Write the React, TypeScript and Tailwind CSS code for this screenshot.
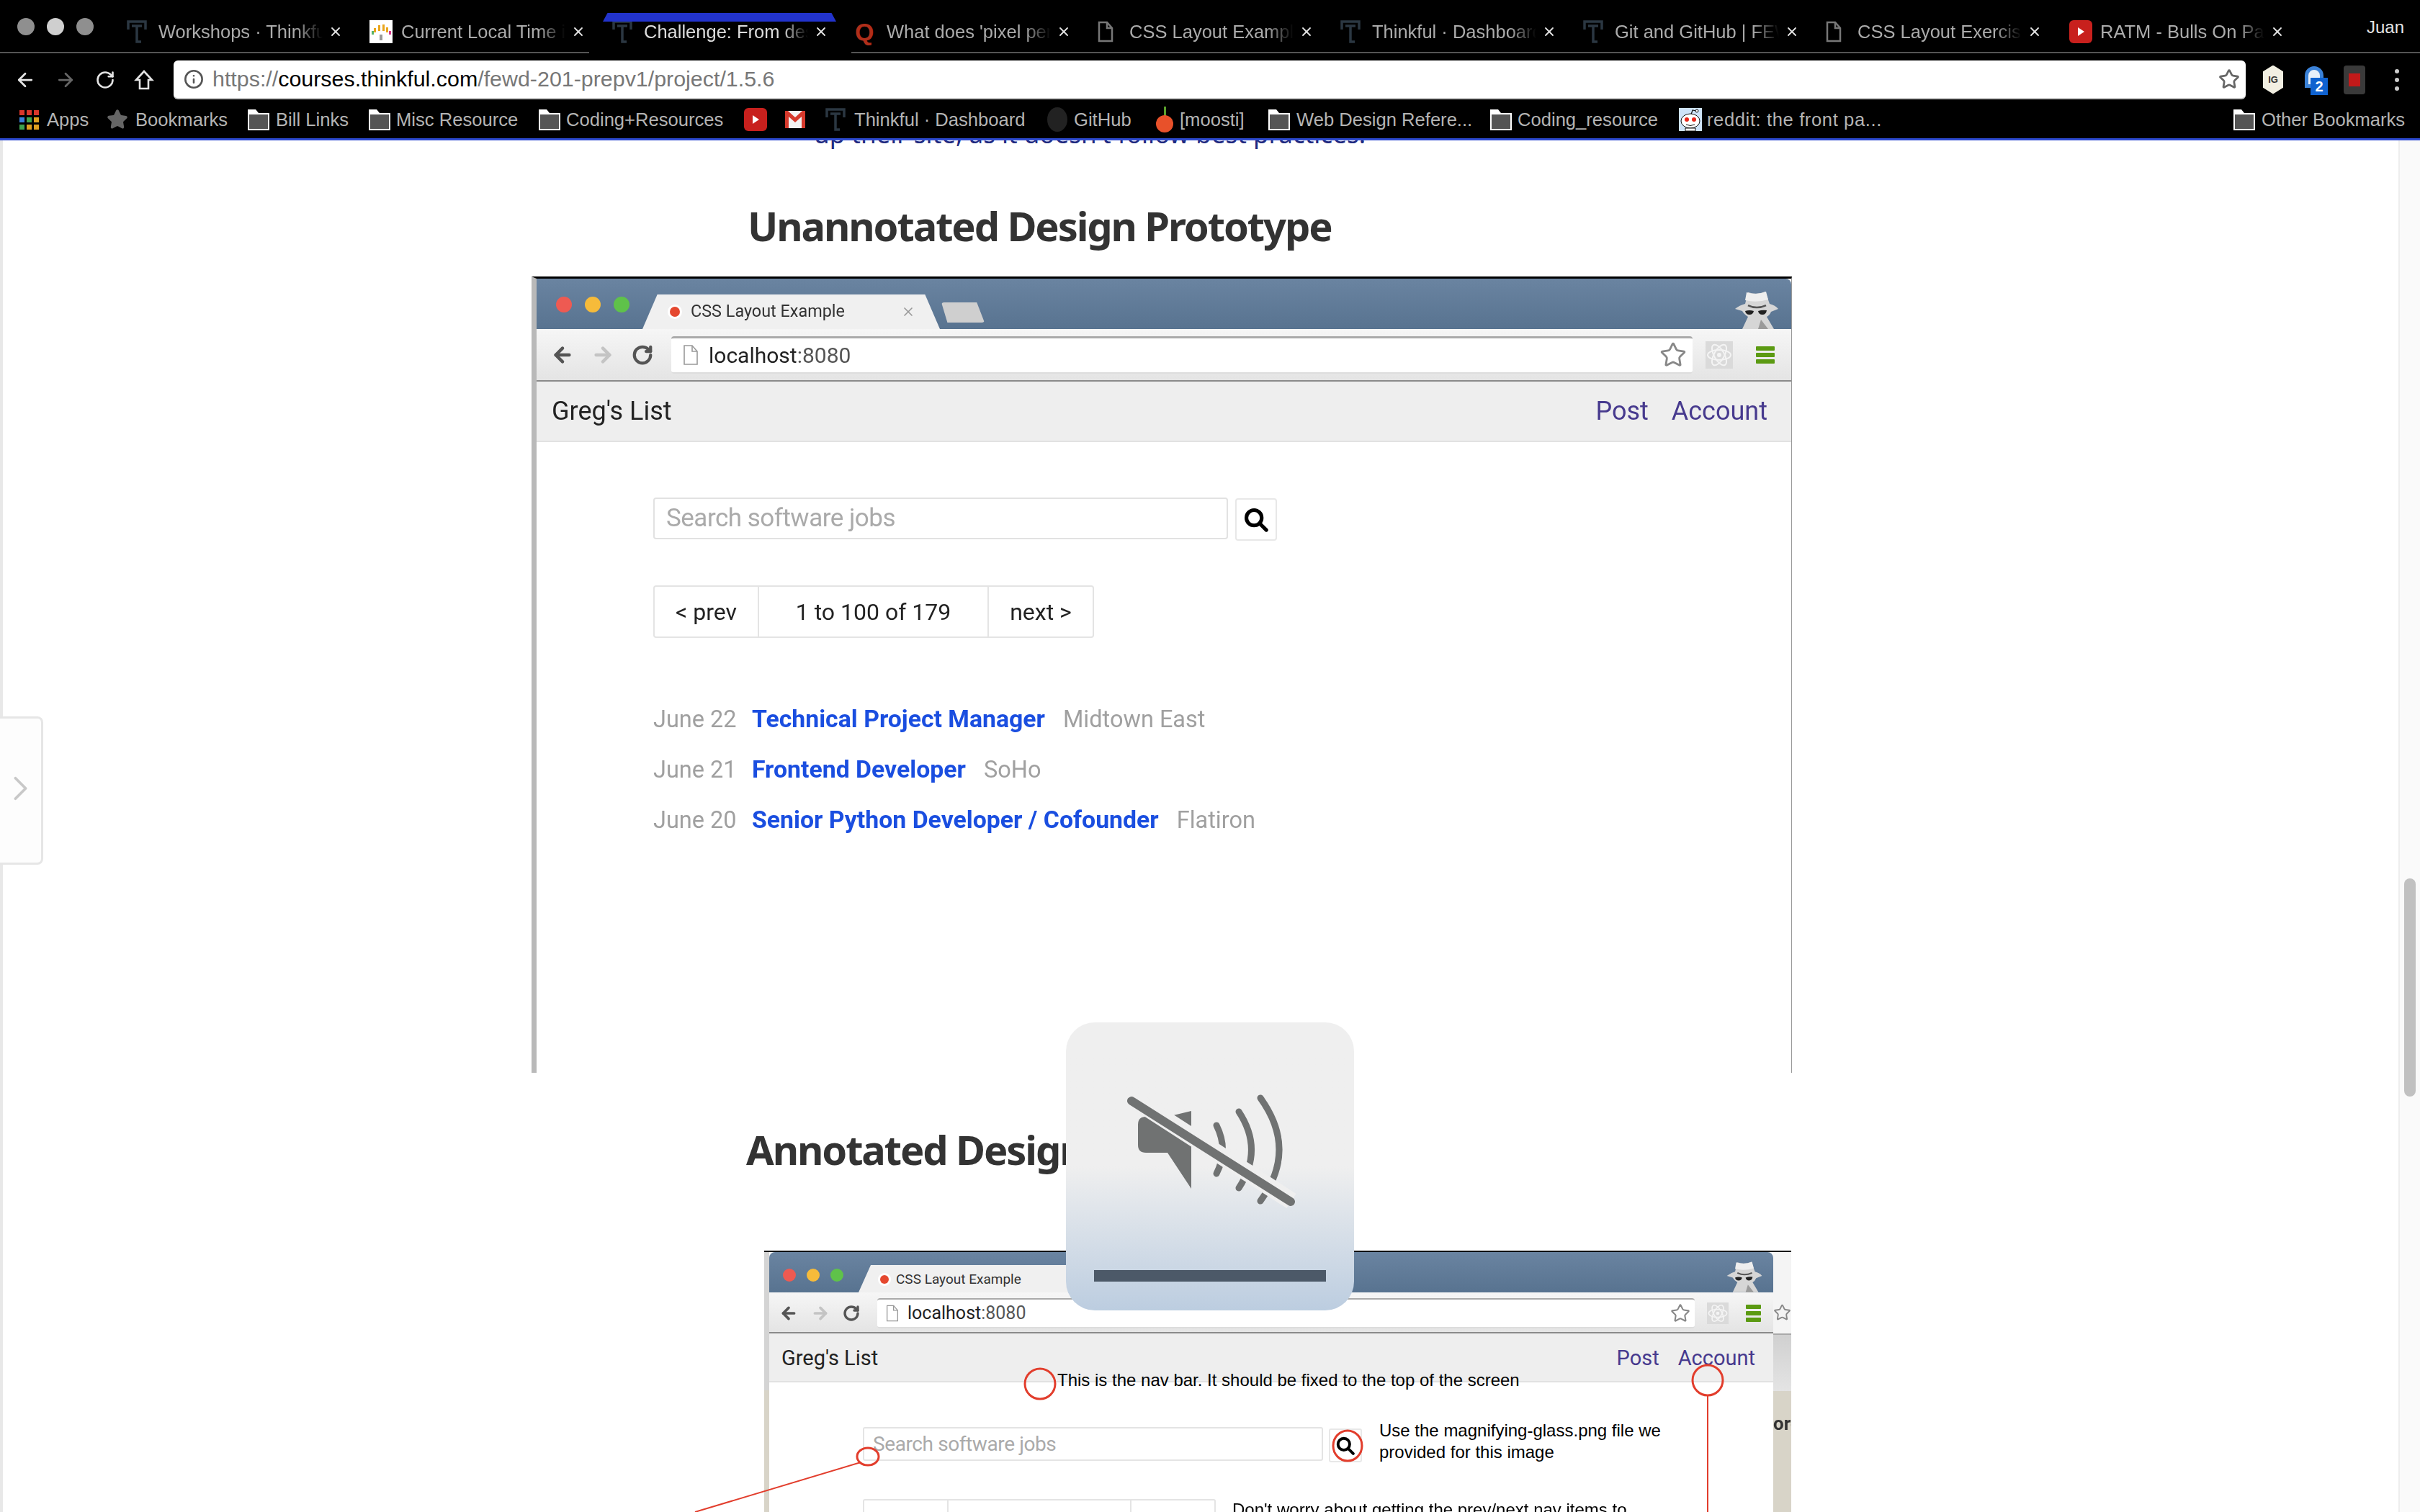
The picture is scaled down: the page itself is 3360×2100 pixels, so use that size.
import React from "react";
import { ArrowLeft, ArrowRight, RotateCw, Info, Star, X, ChevronRight } from "lucide-react";

const Thinkful = () => (
  <svg width="28" height="32" viewBox="0 0 28 32" fill="none" stroke="#2b3742" strokeWidth="3.5">
    <path d="M2 13V2h24v11" />
    <path d="M7 8h14M14 8v22h6" />
  </svg>
);
const Doc = ({ c = "#777" }: { c?: string }) => (
  <svg width="22" height="30" viewBox="0 0 22 30" fill="none" stroke={c} strokeWidth="2.5">
    <path d="M2 2h11l7 8v18H2z" />
    <path d="M13 2v8h7" />
  </svg>
);
const Yt = () => (
  <svg width="34" height="34" viewBox="0 0 34 34">
    <rect x="1" y="1" width="32" height="32" rx="6" fill="#c8201d" />
    <path d="M13 11l9 6-9 6z" fill="#fff" />
  </svg>
);
const Folder = () => (
  <svg width="32" height="32" viewBox="0 0 32 32">
    <path d="M1 31V2h11l4 5h15v24z" fill="#fff" />
    <rect x="3" y="9" width="26" height="20" fill="#555" />
  </svg>
);
const Apps = () => {
  const cells = ["#d9362b", "#d9362b", "#d9362b", "#3a7fd8", "#3fa34d", "#e0a020", "#3fa34d", "#e0a020", "#e0a020"];
  return (
    <div className="grid grid-cols-3 gap-[3px] w-[27px]">
      {cells.map((c, i) => (
        <span key={i} className="h-[7px]" style={{ background: c }} />
      ))}
    </div>
  );
};
const Gmail = () => (
  <svg width="28" height="24" viewBox="0 0 28 24">
    <rect width="28" height="24" fill="#f2f2f2" />
    <path d="M0 0h4l10 9 10-9h4v24h-5V8l-9 8-9-8v16H0z" fill="#d6392c" />
  </svg>
);
const Tomato = () => (
  <svg width="26" height="36" viewBox="0 0 26 36">
    <path d="M12 0h3v14h-3z" fill="#5aa02c" />
    <ellipse cx="13" cy="24" rx="12" ry="12" fill="#e8512a" />
  </svg>
);
const Reddit = () => (
  <svg width="32" height="32" viewBox="0 0 32 32">
    <rect width="32" height="32" fill="#cee3f8" />
    <path d="M17 9l2-6 5 1" stroke="#111" strokeWidth="1.2" fill="none" />
    <circle cx="25" cy="4" r="2" fill="#fff" stroke="#111" />
    <ellipse cx="16" cy="18" rx="13" ry="10" fill="#fff" stroke="#111" />
    <circle cx="11" cy="16" r="3" fill="#e8261a" />
    <circle cx="21" cy="16" r="3" fill="#e8261a" />
    <path d="M10 23q6 3 12 0" stroke="#111" fill="none" />
    <path d="M9 28h14v4H9z" fill="#fff" stroke="#111" />
  </svg>
);
const Spy = ({ w = 64 }: { w?: number }) => (
  <svg width={w} height={w * 0.86} viewBox="0 0 64 55" className="block">
    <path d="M20 4Q32 8 44 3L50 20Q58 22 62 27L52 31Q50 36 46 38L56 55H12L20 38Q14 34 12 30L2 27Q8 22 16 20Z" fill="#d6d6d6" />
    <path d="M18 4Q32 9 45 3L48 14Q32 19 16 15Z" fill="#eeeeee" />
    <path d="M20 22q12 6 25 0" stroke="#555" strokeWidth="2.5" fill="none" />
    <path d="M16 30q6-2 12 0-1 5-6 5t-6-5zM34 30q6-2 12-1-1 6-6 6t-6-5z" fill="#222" />
    <path d="M38 42l10 13H34z" fill="#9a9a9a" />
  </svg>
);
const ReactBox = ({ s = 38 }: { s?: number }) => (
  <svg width={s} height={s} viewBox="0 0 38 38">
    <rect width="38" height="38" fill="#dadada" />
    <g fill="none" stroke="#f4f4f4" strokeWidth="2">
      <ellipse cx="19" cy="19" rx="16" ry="7" />
      <ellipse cx="19" cy="19" rx="16" ry="7" transform="rotate(60 19 19)" />
      <ellipse cx="19" cy="19" rx="16" ry="7" transform="rotate(120 19 19)" />
    </g>
    <circle cx="19" cy="19" r="3" fill="#f4f4f4" />
  </svg>
);
const Burger = ({ w = 26 }: { w?: number }) => (
  <div className="flex flex-col gap-[3px]" style={{ width: w }}>
    <span className="h-[6px] rounded-[1px] bg-[#5b9a12]" />
    <span className="h-[6px] rounded-[1px] bg-[#5b9a12]" />
    <span className="h-[6px] rounded-[1px] bg-[#5b9a12]" />
  </div>
);
const MiniDoc = ({ w, h }: { w: number; h: number }) => (
  <svg width={w} height={h} viewBox="0 0 22 30" fill="#fff" stroke="#999" strokeWidth="1.6">
    <path d="M2 2h11l7 8v18H2z" />
    <path d="M13 2v8h7" fill="none" />
  </svg>
);
const Lens = ({ s }: { s: number }) => (
  <svg width={s} height={s} viewBox="0 0 24 24" fill="none" stroke="#000" strokeWidth="3.6">
    <circle cx="10" cy="10" r="7.5" />
    <path d="M15.5 15.5L22 22" strokeLinecap="round" />
  </svg>
);

const tabs = [
  { t: "Workshops · Thinkful", i: <Thinkful /> },
  {
    t: "Current Local Time in",
    i: (
      <svg width="32" height="32" viewBox="0 0 32 32">
        <rect width="32" height="32" fill="#fff" />
        <path d="M6 11h3v6H6zM12 7h3v8h-3zM18 6h3v9h-3zM23 10h3v7h-3z" fill="#e9a61c" />
        <path d="M3 15h3v5H3z" fill="#58b368" />
        <path d="M27 15h3v5h-3z" fill="#d93a8c" />
        <path d="M14 20h4v8h-4z" fill="#999" />
      </svg>
    ),
  },
  { t: "Challenge: From design", i: <Thinkful />, active: true },
  { t: "What does 'pixel perfect", i: <span className="font-bold text-[34px] leading-none text-[#b02e1a]">Q</span> },
  { t: "CSS Layout Example", i: <Doc /> },
  { t: "Thinkful · Dashboard", i: <Thinkful /> },
  { t: "Git and GitHub | FEWD", i: <Thinkful /> },
  { t: "CSS Layout Exercise", i: <Doc /> },
  { t: "RATM - Bulls On Parade", i: <Yt /> },
];

export default function App() {
  return (
    <div className="relative w-[3360px] h-[2100px] overflow-hidden bg-white flex flex-col font-['Liberation_Sans',sans-serif]">
      {/* Browser chrome */}
      <header className="relative h-[195px] shrink-0 bg-black border-b-[3px] border-[#2d4ad0] flex flex-col">
        <div className="relative h-[74px] flex items-center pt-[16px] border-b-[2px] border-[#555]">
          <div className="flex gap-[17px] w-[168px] pl-[24px] -mt-[14px]">
            <span className="w-[24px] h-[24px] rounded-full bg-[#8f8f8f]" />
            <span className="w-[24px] h-[24px] rounded-full bg-[#cfcfcf]" />
            <span className="w-[24px] h-[24px] rounded-full bg-[#8f8f8f]" />
          </div>
          {tabs.map((t) => (
            <div key={t.t} className="relative w-[337px] shrink-0 flex items-center pl-[8px] h-[40px]">
              <div className="w-[44px] flex items-center">{t.i}</div>
              <div
                className={`w-[228px] whitespace-nowrap overflow-hidden text-[25.5px] [mask-image:linear-gradient(to_right,black_84%,transparent)] ${
                  t.active ? "text-[#dcdcdc]" : "text-[#ababab]"
                }`}
              >
                {t.t}
              </div>
              <div className="w-[36px] flex justify-center">
                <X size={20} strokeWidth={2.2} color="#e4e4e4" />
              </div>
            </div>
          ))}
          <div className="ml-auto pr-[22px] -mt-[12px] text-[24px] text-[#e4e4e4]">Juan</div>
          <div className="absolute left-[818px] top-[72px] w-[364px] h-[2px] bg-black" />
          <div className="absolute left-[837px] top-[18px] w-[324px] h-[12px] bg-[#2233cc] [clip-path:polygon(2%_0,98%_0,100%_100%,0_100%)]" />
        </div>

        <div className="h-[70px] flex items-center pt-[3px]">
          <div className="w-[241px] flex items-center pl-[20px] gap-[26px]">
            <ArrowLeft size={30} color="#e4e4e4" strokeWidth={2.2} />
            <ArrowRight size={30} color="#666" strokeWidth={2.2} />
            <RotateCw size={28} color="#e4e4e4" strokeWidth={2.2} />
            <svg width="28" height="30" viewBox="0 0 28 30" fill="none" stroke="#e4e4e4" strokeWidth="2.6">
              <path d="M14 3L3 15h5v12h12V15h5z" />
            </svg>
          </div>
          <div className="w-[2877px] h-[54px] rounded-[6px] bg-white border-b-[2px] border-[#c4c4c4] flex items-center pl-[14px] pr-[8px]">
            <Info size={28} color="#555" strokeWidth={2.2} />
            <div className="ml-[12px] text-[30.4px] text-[#777] whitespace-nowrap">
              https://<span className="text-black">courses.thinkful.com</span>/fewd-201-prepv1/project/1.5.6
            </div>
            <Star size={30} color="#666" strokeWidth={2.2} className="ml-auto" />
          </div>
          <div className="flex items-center">
            <div className="ml-[24px] w-[28px] h-[40px] bg-[#f2efe2] [clip-path:polygon(50%_0,100%_22%,100%_78%,50%_100%,0_78%,0_22%)] flex items-center justify-center text-[13px] font-bold text-[#333]">IG</div>
            <div className="relative ml-[30px] w-[30px] h-[38px]">
              <div className="w-[26px] h-[30px] rounded-t-full bg-[#e8f0fa] border-[5px] border-[#3b82d8]" />
              <span className="absolute left-[8px] top-[16px] w-[24px] h-[24px] bg-[#0f62d0] text-white text-[20px] font-bold leading-[24px] text-center">2</span>
            </div>
            <div className="ml-[24px] w-[30px] h-[40px] rounded-[4px] bg-[#3a3a3a] flex items-center justify-center">
              <span className="w-[16px] h-[18px] bg-[#c21a1a]" />
            </div>
            <div className="ml-[41px] flex flex-col gap-[6px]">
              <span className="w-[6px] h-[6px] rounded-full bg-[#ccc]" />
              <span className="w-[6px] h-[6px] rounded-full bg-[#ccc]" />
              <span className="w-[6px] h-[6px] rounded-full bg-[#ccc]" />
            </div>
          </div>
        </div>

        <div className="flex-1 flex items-center pb-[4px] text-[25.6px] text-[#b4b4b4] whitespace-nowrap">
          <div className="w-[65px] pl-[27px]"><Apps /></div>
          <div className="w-[83px]">Apps</div>
          <div className="w-[40px]"><Star size={30} color="#666" fill="#666" /></div>
          <div className="w-[155px]">Bookmarks</div>
          <div className="w-[40px]"><Folder /></div>
          <div className="w-[128px]">Bill Links</div>
          <div className="w-[39px]"><Folder /></div>
          <div className="w-[197px]">Misc Resource</div>
          <div className="w-[39px]"><Folder /></div>
          <div className="w-[246px]">Coding+Resources</div>
          <div className="w-[58px]"><Yt /></div>
          <div className="w-[56px]"><Gmail /></div>
          <div className="w-[40px]"><Thinkful /></div>
          <div className="w-[267px]">Thinkful · Dashboard</div>
          <div className="w-[38px]"><svg width="30" height="36" viewBox="0 0 30 36"><ellipse cx="15" cy="18" rx="14" ry="17" fill="#222" /></svg></div>
          <div className="w-[113px]">GitHub</div>
          <div className="w-[34px]"><Tomato /></div>
          <div className="w-[122px]">[moosti]</div>
          <div className="w-[40px]"><Folder /></div>
          <div className="w-[268px]">Web Design Refere...</div>
          <div className="w-[39px]"><Folder /></div>
          <div className="w-[224px]">Coding_resource</div>
          <div className="w-[39px]"><Reddit /></div>
          <div className="w-[730px] tracking-[0.6px]">reddit: the front pa...</div>
          <div className="w-[40px]"><Folder /></div>
          <div>Other Bookmarks</div>
        </div>
      </header>

      {/* Page */}
      <div className="flex-1 flex min-h-0">
        <div className="w-[4px] bg-[#e8e8e8]" />
        <main className="flex-1 min-w-0 overflow-hidden bg-white">
          <p className="-mt-[31px] ml-[1126px] h-[44px] text-[35px] leading-[44px] text-[#1f2a80] font-['Noto_Sans',sans-serif] whitespace-nowrap">
            up their site, as it doesn't follow best practices.
          </p>
          <h2 className="mt-[65px] ml-[1034px] h-[80px] text-[56px] leading-[80px] font-bold text-[#333] font-['Noto_Sans',sans-serif] tracking-[-2.1px] whitespace-nowrap">
            Unannotated Design Prototype
          </h2>

          {/* first prototype */}
          <figure className="mt-[31px] ml-[734px] w-[1750px] h-[1106px] border-t-[3px] border-black border-l-[7px] border-l-[#b9b9b9] border-r-[1px] border-r-[#999] flex flex-col blur-[0.7px] font-['Roboto',sans-serif]">
            <div className="relative h-[70px] shrink-0 rounded-tr-[8px] bg-gradient-to-b from-[#6a84a1] to-[#587390] flex items-end">
              <div className="w-[147px] pl-[27px] pb-[23px] flex gap-[18px] self-end">
                <span className="w-[22px] h-[22px] rounded-full bg-[#ee5a52]" />
                <span className="w-[22px] h-[22px] rounded-full bg-[#f6bb3a]" />
                <span className="w-[22px] h-[22px] rounded-full bg-[#5fc24a]" />
              </div>
              <div className="w-[413px] h-[48px] bg-[#f0f0f0] [clip-path:polygon(0_100%,5%_0,95%_0,100%_100%)] flex items-center pl-[38px] text-[23.4px] text-[#333]">
                <span className="w-[14px] h-[14px] rounded-full bg-[#e5482f] ring-[3px] ring-white mr-[15px]" />
                <span className="w-[292px] whitespace-nowrap">CSS Layout Example</span>
                <X size={20} color="#999" />
              </div>
              <div className="ml-[2px] mb-[9px] w-[60px] h-[28px] bg-[#cfcfcf] rounded-[4px] [clip-path:polygon(0_0,82%_0,100%_100%,14%_100%)]" />
              <div className="ml-auto mr-[16px]"><Spy /></div>
            </div>
            <div className="h-[73px] shrink-0 bg-gradient-to-b from-[#f6f6f6] to-[#e4e4e4] border-b-[2px] border-[#8a8a8a] flex items-center">
              <div className="w-[187px] flex items-center pl-[20px] gap-[24px]">
                <ArrowLeft size={32} color="#555" strokeWidth={3.4} />
                <ArrowRight size={32} color="#c4c4c4" strokeWidth={3.4} />
                <RotateCw size={30} color="#555" strokeWidth={3.4} />
              </div>
              <div className="w-[1418px] h-[52px] bg-white rounded-[4px] border-t-[3px] border-[#aaa] border-b-[2px] border-b-[#ddd] flex items-center pl-[16px] pr-[8px] text-[30px] text-[#555]">
                <MiniDoc w={22} h={30} />
                <span className="ml-[14px]"><span className="text-[#222]">localhost</span>:8080</span>
                <Star size={38} color="#888" strokeWidth={1.8} className="ml-auto" />
              </div>
              <div className="ml-[18px]"><ReactBox /></div>
              <div className="ml-[32px]"><Burger /></div>
            </div>
            <div className="h-[84px] shrink-0 bg-[#eeeeee] border-b-[2px] border-[#e2e2e2] flex items-center pl-[21px] pr-[33px] text-[36px]">
              <span className="text-[#222]">Greg's List</span>
              <span className="ml-auto text-[#473a8e]">Post</span>
              <span className="ml-[32px] text-[#473a8e]">Account</span>
            </div>
            <div className="flex-1 bg-white pl-[162px] pt-[77px] text-[32px]">
              <div className="flex items-start">
                <div className="w-[798px] h-[58px] border-[2px] border-[#e2e2e2] rounded-[4px] flex items-center pl-[16px] text-[#aaa] text-[35px] tracking-[-0.5px]">Search software jobs</div>
                <div className="ml-[10px] mt-[1px] w-[58px] h-[59px] border-[2px] border-[#e8e8e8] rounded-[4px] flex items-center justify-center"><Lens s={34} /></div>
              </div>
              <div className="mt-[62px] w-[612px] h-[73px] border-[2px] border-[#e4e4e4] rounded-[4px] flex text-[#222]">
                <div className="w-[145px] border-r-[2px] border-[#e4e4e4] flex items-center justify-center">&lt; prev</div>
                <div className="w-[319px] border-r-[2px] border-[#e4e4e4] flex items-center justify-center">1 to 100 of 179</div>
                <div className="flex-1 flex items-center justify-center">next &gt;</div>
              </div>
              <div className="mt-[93px] flex flex-col gap-[30px] text-[32.5px] leading-[40px] text-[#a0a0a0]">
                {[
                  ["June 22", "Technical Project Manager", "Midtown East"],
                  ["June 21", "Frontend Developer", "SoHo"],
                  ["June 20", "Senior Python Developer / Cofounder", "Flatiron"],
                ].map(([d, t, l]) => (
                  <div key={d} className="flex">
                    <span className="w-[137px]">{d}</span>
                    <span className="font-bold text-[33.8px] text-[#1a4ee0]">{t}</span>
                    <span className="ml-[25px]">{l}</span>
                  </div>
                ))}
              </div>
            </div>
          </figure>

          <h2 className="mt-[66px] ml-[1032px] h-[80px] text-[56px] leading-[80px] font-bold text-[#333] font-['Noto_Sans',sans-serif] tracking-[-2.1px] whitespace-nowrap">
            Annotated Design Prototype
          </h2>

          {/* second prototype */}
          <figure className="relative mt-[101px] ml-[1057px] w-[1426px] h-[363px] border-t-[2px] border-black flex blur-[0.6px] font-['Roboto',sans-serif]">
            <div className="w-[7px] flex flex-col">
              <div className="h-[192px] bg-[#d4d4d4]" />
              <div className="flex-1 bg-[#d8d4c8]" />
            </div>
            <div className="w-[1394px] flex flex-col overflow-hidden">
              <div className="relative h-[56px] shrink-0 rounded-t-[8px] bg-gradient-to-b from-[#6a84a1] to-[#587390] flex items-end">
                <div className="w-[124px] pl-[19px] pb-[15px] flex gap-[15px] self-end">
                  <span className="w-[18px] h-[18px] rounded-full bg-[#ee5a52]" />
                  <span className="w-[18px] h-[18px] rounded-full bg-[#f6bb3a]" />
                  <span className="w-[18px] h-[18px] rounded-full bg-[#5fc24a]" />
                </div>
                <div className="w-[340px] h-[38px] bg-[#f0f0f0] [clip-path:polygon(0_100%,5%_0,95%_0,100%_100%)] flex items-center pl-[30px] pt-[2px] text-[19px] text-[#333]">
                  <span className="w-[12px] h-[12px] rounded-full bg-[#e5482f] ring-[3px] ring-white mr-[10px]" />
                  <span className="whitespace-nowrap">CSS Layout Example</span>
                </div>
                <div className="ml-auto mr-[14px]"><Spy w={52} /></div>
              </div>
              <div className="h-[57px] shrink-0 bg-gradient-to-b from-[#f6f6f6] to-[#e4e4e4] border-b-[2px] border-[#8a8a8a] flex items-center pt-[3px]">
                <div className="w-[150px] flex items-center pl-[14px] gap-[18px]">
                  <ArrowLeft size={26} color="#555" strokeWidth={3.4} />
                  <ArrowRight size={26} color="#c4c4c4" strokeWidth={3.4} />
                  <RotateCw size={24} color="#555" strokeWidth={3.4} />
                </div>
                <div className="w-[1135px] h-[42px] bg-white rounded-[4px] border-t-[2px] border-[#aaa] border-b-[2px] border-b-[#ddd] flex items-center pl-[12px] pr-[6px] text-[25px] text-[#555]">
                  <MiniDoc w={18} h={26} />
                  <span className="ml-[12px]"><span className="text-[#222]">localhost</span>:8080</span>
                  <Star size={28} color="#888" strokeWidth={1.8} className="ml-auto" />
                </div>
                <div className="ml-[17px]"><ReactBox s={30} /></div>
                <div className="ml-[24px]"><Burger w={21} /></div>
              </div>
              <div className="h-[68px] shrink-0 bg-[#eeeeee] border-b-[2px] border-[#e2e2e2] flex items-center pl-[17px] pr-[25px] pt-[4px] text-[29px]">
                <span className="text-[#222]">Greg's List</span>
                <span className="ml-auto text-[#473a8e]">Post</span>
                <span className="ml-[26px] text-[#473a8e]">Account</span>
              </div>
              <div className="flex-1 bg-white pl-[130px] pt-[62px] text-[26px]">
                <div className="flex items-start">
                  <div className="w-[639px] h-[47px] border-[2px] border-[#e4e4e4] rounded-[3px] flex items-center pl-[12px] text-[#aaa] text-[28px] tracking-[-0.4px]">Search software jobs</div>
                  <div className="ml-[8px] mt-[2px] w-[46px] h-[47px] border-[2px] border-[#e8e8e8] rounded-[3px] flex items-center justify-center"><Lens s={26} /></div>
                </div>
                <div className="mt-[51px] w-[490px] h-[60px] shrink-0 border-[2px] border-[#e4e4e4] rounded-[3px] flex text-[#222]">
                  <div className="w-[117px] border-r-[2px] border-[#e4e4e4] flex items-center justify-center">&lt; prev</div>
                  <div className="w-[254px] border-r-[2px] border-[#e4e4e4] flex items-center justify-center">1 to 100 of 179</div>
                  <div className="flex-1 flex items-center justify-center">next &gt;</div>
                </div>
              </div>
            </div>
            <div className="w-[25px] flex flex-col">
              <div className="h-[115px] bg-[#f4f4f4] border-b-[2px] border-[#aaa] flex items-end overflow-hidden pb-[12px]">
                <Star size={34} color="#888" strokeWidth={1.8} />
              </div>
              <div className="h-[78px] bg-gradient-to-b from-[#d0d0d0] to-[#e4e4e4]" />
              <div className="flex-1 bg-[#d8d4c8] overflow-hidden whitespace-nowrap pt-[26px] text-[26px] font-bold text-[#333]">orc</div>
            </div>
            <div className="absolute left-[407px] top-[164px] text-[24px] leading-[28px] text-black font-['Liberation_Sans',sans-serif] whitespace-nowrap">This is the nav bar. It should be fixed to the top of the screen</div>
            <div className="absolute left-[854px] top-[233px] text-[24px] leading-[30px] text-black font-['Liberation_Sans',sans-serif] whitespace-nowrap">Use the magnifying-glass.png file we<br />provided for this image</div>
            <div className="absolute left-[650px] top-[343px] text-[24px] leading-[30px] text-black font-['Liberation_Sans',sans-serif] whitespace-nowrap">Don't worry about getting the prev/next nav items to</div>
          </figure>
        </main>
        <div className="w-[30px] bg-[#fafafa] border-l-[2px] border-[#eeeeee] relative">
          <div className="absolute left-[6px] top-[1025px] w-[16px] h-[303px] rounded-full bg-[#c1c1c1]" />
        </div>
      </div>

      {/* Annotation circles and leaders over the second prototype */}
      <svg className="absolute left-0 top-0 pointer-events-none" width="3360" height="2100" fill="none" stroke="#e23d2c" strokeWidth="3">
        <circle cx="1444" cy="1922" r="21" />
        <circle cx="2371" cy="1917" r="21" />
        <path d="M2371 1938V2100" strokeWidth="2" />
        <ellipse cx="1871" cy="2008" rx="20" ry="21" />
        <ellipse cx="1205" cy="2023" rx="15" ry="12" />
        <path d="M1195 2031L965 2100" strokeWidth="2" />
      </svg>

      {/* Collapsed side tab */}
      <div className="absolute left-0 top-[995px] w-[60px] h-[206px] bg-[#fdfdfd] border-[3px] border-l-0 border-[#e6e6e6] rounded-r-[8px] flex items-center justify-center">
        <ChevronRight size={72} color="#c8c8c8" strokeWidth={1.6} className="-mt-[6px]" />
      </div>

      {/* System mute HUD */}
      <div className="absolute left-[1480px] top-[1420px] w-[400px] h-[400px] rounded-[40px] bg-gradient-to-b from-[#efefef] from-50% to-[#bccde0] flex flex-col items-center">
        <svg width="400" height="320" viewBox="1480 1420 400 320" fill="none" className="shrink-0">
          <path d="M1654 1543v108l-33-50h-30q-11 0-11-11v-28q0-11 11-11h30z" fill="#707272" />
          <path d="M1689 1563q17 34 0 67" stroke="#707272" strokeWidth="9" strokeLinecap="round" />
          <path d="M1720 1544q35 53 0 106" stroke="#707272" strokeWidth="9" strokeLinecap="round" />
          <path d="M1750 1525q52 72 0 143" stroke="#707272" strokeWidth="9" strokeLinecap="round" />
          <path d="M1576 1528L1793 1668" stroke="#efefef" strokeWidth="24" />
          <path d="M1571 1529L1792 1669" stroke="#707272" strokeWidth="12" strokeLinecap="round" />
        </svg>
        <div className="mt-[24px] w-[322px] h-[16px] bg-[#4c5968]" />
      </div>
    </div>
  );
}
